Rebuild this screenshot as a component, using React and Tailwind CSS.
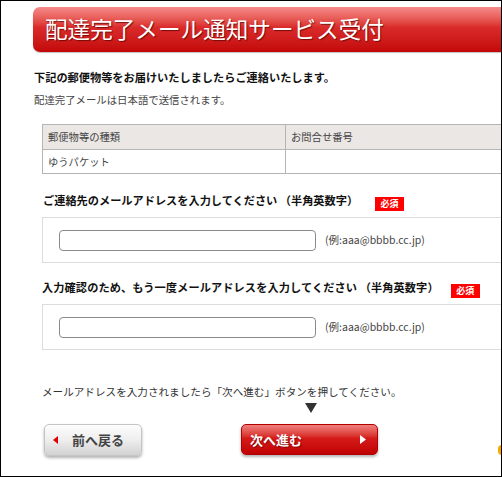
import React from 'react'

const Badge = () => (
  <span className="inline-flex items-center justify-center w-[29px] h-[14px] bg-[#ff0000] text-white text-[9px] font-bold leading-none">
    必須
  </span>
)

const EmailBox = () => (
  <div className="w-[600px] h-[46px] border border-[#dcdcdc] flex items-center pl-[16px]">
    <input
      type="text"
      className="w-[257px] h-[21px] rounded-[4px] border border-[#8a8a8a] bg-white outline-none"
    />
    <span className="ml-[9px] text-[10.5px] text-[#444]">(例:aaa@bbbb.cc.jp)</span>
  </div>
)

const App = () => {
  return (
    <div className="w-[502px] h-[477px] border border-black overflow-hidden bg-white font-['Noto_Sans_CJK_JP','Noto_Sans_CJK_SC',sans-serif] text-[#222]">
      {/* header bar */}
      <div className="mt-[6px] ml-[32px] w-[600px] h-[45px] rounded-l-[7px] bg-gradient-to-b from-[#f58b8b] via-[#da2a2a] via-45% to-[#c30606] shadow-[0_1px_1px_rgba(0,0,0,0.25)] flex items-center pl-[12px]">
        <h1 className="text-white text-[22.6px] leading-none [text-shadow:1px_1px_1px_rgba(80,0,0,0.7)]">
          配達完了メール通知サービス受付
        </h1>
      </div>

      <div className="ml-[33px]">
        <p className="mt-[17px] text-[11.2px] font-bold leading-[16px] text-[#111]">
          下記の郵便物等をお届けいたしましたらご連絡いたします。
        </p>
        <p className="mt-[7px] text-[10.4px] leading-[16px] text-[#444]">配達完了メールは日本語で送信されます。</p>
      </div>

      <div className="ml-[41px]">
        {/* table */}
        <div className="mt-[16px] w-[600px] border border-[#b5b5b5] text-[10.3px] text-[#444]">
          <div className="flex h-[25px] bg-[#ebe7e4] border-b border-[#b5b5b5]">
            <div className="w-[243px] border-r border-[#b5b5b5] flex items-center pl-[5px]">郵便物等の種類</div>
            <div className="flex-1 flex items-center pl-[5px]">お問合せ番号</div>
          </div>
          <div className="flex h-[23px]">
            <div className="w-[243px] border-r border-[#b5b5b5] flex items-center pl-[5px]">ゆうパケット</div>
            <div className="flex-1" />
          </div>
        </div>

        <div className="mt-[18px] flex items-center h-[16px] pl-[1px]">
          <span className="text-[11.2px] font-bold text-[#111]">ご連絡先のメールアドレスを入力してください （半角英数字）</span>
          <span className="ml-[17px]"><Badge /></span>
        </div>
        <div className="mt-[9px]">
          <EmailBox />
        </div>

        <div className="mt-[16px] flex items-center h-[16px] w-[600px]">
          <span className="text-[11.2px] font-bold text-[#111] tracking-[0.1px]">入力確認のため、もう一度メールアドレスを入力してください （半角英数字）</span>
          <span className="ml-[12px]"><Badge /></span>
        </div>
        <div className="mt-[9px]">
          <EmailBox />
        </div>

        <p className="mt-[34px] text-[10.6px] leading-[16px] text-[#333]">
          メールアドレスを入力されましたら「次へ進む」ボタンを押してください。
        </p>

        <div className="mt-[3px] ml-[263px] h-[10px]">
          <svg width="12" height="10" viewBox="0 0 12 10">
            <path d="M0 0H12L6 10Z" fill="#333" />
          </svg>
        </div>

        {/* buttons */}
        <div className="mt-[11px] flex items-start w-[600px]">
          <button className="shrink-0 ml-[2px] w-[98px] h-[32px] rounded-[5px] border border-[#c4c4c4] bg-gradient-to-b from-[#fdfdfd] via-[#eeeeee] to-[#d2d2d2] shadow-[0_2px_3px_rgba(0,0,0,0.3)] flex items-center pl-[8px]">
            <svg width="5" height="8" viewBox="0 0 5 8">
              <path d="M5 0V8L0 4Z" fill="#e00000" />
            </svg>
            <span className="ml-[14px] text-[13px] font-bold text-[#444]">前へ戻る</span>
          </button>
          <button className="shrink-0 ml-[99px] w-[137px] h-[31px] rounded-[5px] border border-[#b00000] bg-gradient-to-b from-[#ef7d7d] via-[#d51a1a] via-45% to-[#c00000] shadow-[0_2px_3px_rgba(0,0,0,0.3)] flex items-center pl-[8px] pr-[11px]">
            <span className="text-[13px] font-bold text-white [text-shadow:1px_1px_1px_rgba(80,0,0,0.6)]">次へ進む</span>
            <svg className="ml-auto" width="6" height="9" viewBox="0 0 6 9">
              <path d="M0 0V9L6 4.5Z" fill="#fff" />
            </svg>
          </button>
          <div className="shrink-0 ml-[120px] mt-[21px] w-[8px] h-[10px] rounded-full bg-[#f5a800]" />
        </div>
      </div>
    </div>
  )
}

export default App
